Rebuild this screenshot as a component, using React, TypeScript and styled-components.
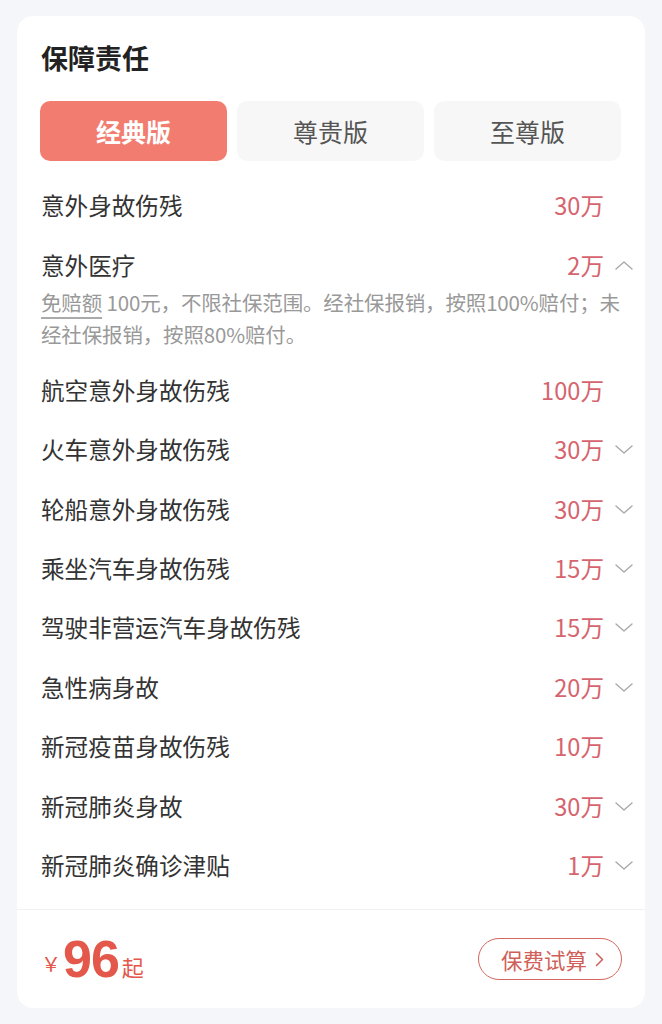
import React, { useState } from "react";
import styled, { createGlobalStyle } from "styled-components";

const GlobalStyle = createGlobalStyle`
    body {
        margin: 0;
        background: #f4f6f9;
        font-family: "Noto Sans CJK SC", "Noto Sans", sans-serif;
        color: #333;
    }
`;

type Item = { name: string; amount: string; expandable: boolean; open?: boolean };

const items: Item[] = [
    { name: "意外身故伤残", amount: "30万", expandable: false },
    { name: "意外医疗", amount: "2万", expandable: true, open: true },
    { name: "航空意外身故伤残", amount: "100万", expandable: false },
    { name: "火车意外身故伤残", amount: "30万", expandable: true },
    { name: "轮船意外身故伤残", amount: "30万", expandable: true },
    { name: "乘坐汽车身故伤残", amount: "15万", expandable: true },
    { name: "驾驶非营运汽车身故伤残", amount: "15万", expandable: true },
    { name: "急性病身故", amount: "20万", expandable: true },
    { name: "新冠疫苗身故伤残", amount: "10万", expandable: false },
    { name: "新冠肺炎身故", amount: "30万", expandable: true },
    { name: "新冠肺炎确诊津贴", amount: "1万", expandable: true },
];

const plans = ["经典版", "尊贵版", "至尊版"];

const Page = styled.div`
    padding: 16px 17px 17px;
`;

const Card = styled.div`
    background: #fff;
    border-radius: 16px;
    overflow: hidden;
`;

const Title = styled.h2`
    margin: 0;
    padding: 26px 24px 0;
    font-size: 27px;
    line-height: 32px;
    font-weight: 700;
    color: #222;
`;

const Tabs = styled.div`
    display: grid;
    grid-template-columns: repeat(3, 1fr);
    gap: 10px;
    padding: 27px 24px 0 23px;
`;

const Tab = styled.button<{ $active: boolean }>`
    height: 60px;
    border: none;
    border-radius: 10px;
    font-family: inherit;
    font-size: 25px;
    font-weight: ${(p) => (p.$active ? 700 : 400)};
    color: ${(p) => (p.$active ? "#fff" : "#555")};
    background: ${(p) => (p.$active ? "#f27c70" : "#f7f7f7")};
    cursor: pointer;
`;

const List = styled.div`
    padding: 15px 0 14px;
`;

const Row = styled.div`
    padding: 14.2px 12px 14.2px 24px;
`;

const RowHead = styled.div`
    display: flex;
    align-items: center;
    font-size: 23.6px;
    line-height: 31px;
`;

const Name = styled.span`
    flex: 1;
    color: #333;
`;

const Amount = styled.span`
    color: #d6646e;
`;

const ArrowSlot = styled.span`
    width: 29px;
    display: flex;
    justify-content: flex-end;
    align-items: center;
`;

const Desc = styled.p`
    margin: 5px 0 -3px 0;
    font-size: 20.5px;
    letter-spacing: -0.15px;
    line-height: 32px;
    color: #999;
`;

const Term = styled.span`
    text-decoration: underline;
    text-decoration-color: #aaa;
    text-decoration-thickness: 1.5px;
    text-underline-offset: 6px;
`;

const Footer = styled.div`
    display: flex;
    align-items: center;
    justify-content: space-between;
    height: 98px;
    padding: 0 23px 0 24px;
    border-top: 1px solid #f1f1f1;
`;

const Price = styled.div`
    color: #e3584b;
    line-height: 1;
    white-space: nowrap;
`;

const Yen = styled.span`
    font-size: 20px;
    vertical-align: 5px;
    margin-right: 2px;
`;

const Num = styled.span`
    font-family: "Liberation Sans", Arial, sans-serif;
    font-weight: 700;
    font-size: 52px;
    letter-spacing: -1px;
`;

const Unit = styled.span`
    font-size: 22px;
    vertical-align: 1px;
    margin-left: 3px;
`;

const QuoteButton = styled.button`
    display: flex;
    align-items: center;
    gap: 8px;
    height: 42px;
    box-sizing: border-box;
    padding: 0 17px 0 22px;
    border: 1.5px solid #d4675f;
    border-radius: 21px;
    background: #fff;
    font-family: inherit;
    font-size: 21.5px;
    color: #cf5f58;
    cursor: pointer;
`;

const Chevron = ({ up }: { up?: boolean }) => (
    <svg width="18" height="9" viewBox="0 0 18 9" fill="none">
        <polyline
            points={up ? "1,8 9,1 17,8" : "1,1 9,8 17,1"}
            stroke="#aaa"
            strokeWidth="1.4"
            strokeLinecap="round"
            strokeLinejoin="round"
        />
    </svg>
);

const App = () => {
    const [plan, setPlan] = useState(0);

    return (
        <Page>
            <GlobalStyle />
            <Card>
                <Title>保障责任</Title>
                <Tabs>
                    {plans.map((p, i) => (
                        <Tab key={p} $active={plan === i} onClick={() => setPlan(i)}>
                            {p}
                        </Tab>
                    ))}
                </Tabs>
                <List>
                    {items.map((item) => (
                        <Row key={item.name}>
                            <RowHead>
                                <Name>{item.name}</Name>
                                <Amount>{item.amount}</Amount>
                                <ArrowSlot>{item.expandable ? <Chevron up={item.open} /> : null}</ArrowSlot>
                            </RowHead>
                            {item.open ? (
                                <Desc>
                                    <Term>免赔额</Term> 100元，不限社保范围。经社保报销，按照100%赔付；未经社保报销，按照80%赔付。
                                </Desc>
                            ) : null}
                        </Row>
                    ))}
                </List>
                <Footer>
                    <Price>
                        <Yen>￥</Yen>
                        <Num>96</Num>
                        <Unit>起</Unit>
                    </Price>
                    <QuoteButton>
                        保费试算
                        <svg width="9" height="15" viewBox="0 0 9 15" fill="none">
                            <polyline points="1.5,1.5 7.5,7.5 1.5,13.5" stroke="#cf5f58" strokeWidth="1.5" strokeLinecap="round" strokeLinejoin="round" />
                        </svg>
                    </QuoteButton>
                </Footer>
            </Card>
        </Page>
    );
};

export default App;
